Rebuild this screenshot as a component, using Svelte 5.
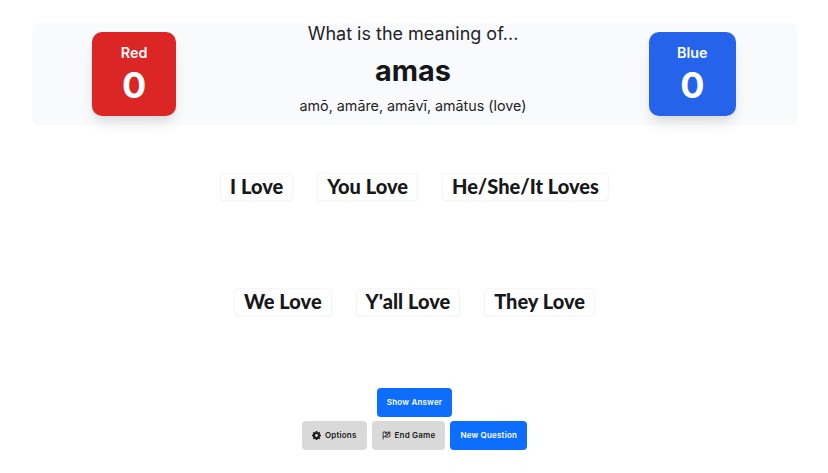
<script lang="ts">
  const rows = [
    ["I Love", "You Love", "He/She/It Loves"],
    ["We Love", "Y'all Love", "They Love"],
  ];
</script>

<div class="page">
  <header class="panel">
    <div class="team red">
      <div class="team-name">Red</div>
      <div class="team-score">0</div>
    </div>
    <div class="prompt">
      <div class="prompt-lead">What is the meaning of...</div>
      <div class="prompt-word">amas</div>
      <div class="prompt-hint">amō, amāre, amāvī, amātus (love)</div>
    </div>
    <div class="team blue">
      <div class="team-name">Blue</div>
      <div class="team-score">0</div>
    </div>
  </header>

  <div class="answers">
    {#each rows as row, i (i)}
      <div class="answer-row">
        {#each row as label (label)}
          <button type="button" class="answer">{label}</button>
        {/each}
      </div>
    {/each}
  </div>

  <div class="controls">
    <div class="control-row">
      <button type="button" class="ctl primary">Show Answer</button>
    </div>
    <div class="control-row">
      <button type="button" class="ctl muted">
        <svg viewBox="0 0 16 16" width="9" height="9" aria-hidden="true">
          <path
            fill="currentColor"
            fill-rule="evenodd"
            d="M6.6 0h2.8l.4 2.1 1.1.5 1.8-1.2 2 2-1.2 1.8.5 1.1 2 .4v2.8l-2 .4-.5 1.1 1.2 1.8-2 2-1.8-1.2-1.1.5-.4 2.1H6.6l-.4-2.1-1.1-.5-1.8 1.2-2-2 1.2-1.8-.5-1.1-2-.4V6.700l2-.4.5-1.100L1.300 3.400l2-2 1.800 1.200 1.100-.5zM8 5.400a2.600 2.600 0 1 0 0 5.200 2.600 2.600 0 0 0 0-5.200z"
          />
        </svg>
        Options
      </button>
      <button type="button" class="ctl muted">
        <svg viewBox="0 0 16 16" width="9" height="9" aria-hidden="true">
          <path
            fill="none"
            stroke="currentColor"
            stroke-width="1.400"
            d="M2 15V2c3-1.500 5 .5 7 .5 2 0 3-.5 5-1v8.500c-2 .5-3 1-5 1s-4-2-7-.5"
          />
          <path fill="currentColor" d="M5 2h3v3H5zM8 5h3v3H8zM11 2h2.500v3H11zM5 8h3v2H5z" />
        </svg>
        End Game
      </button>
      <button type="button" class="ctl primary">New Question</button>
    </div>
  </div>
</div>

<style>
  :global(body) {
    background: #fff;
    font-family: Inter, "Liberation Sans", sans-serif;
  }

  .page {
    height: 473px;
    padding: 23px 31px 0 32px;
    box-sizing: border-box;
    overflow: hidden;
  }

  .panel {
    display: flex;
    justify-content: space-around;
    align-items: flex-start;
    height: 102px;
    background: #f9fafb;
    border-radius: 6px;
  }

  .team {
    margin-top: 9px;
    height: 84px;
    border-radius: 10px;
    color: #fff;
    text-align: center;
    box-shadow:
      0 10px 15px -3px rgba(0, 0, 0, 0.1),
      0 4px 6px -2px rgba(0, 0, 0, 0.05);
    box-sizing: border-box;
    padding-top: 12px;
  }

  .red {
    width: 84px;
    margin-left: -1px;
    margin-right: 1px;
    background: #dc2626;
  }

  .blue {
    width: 87px;
    background: #2563eb;
  }

  .team-name {
    font-size: 14.4px;
    font-weight: 600;
    line-height: 18px;
  }

  .team-score {
    margin-top: 1px;
    font-size: 36px;
    font-weight: 700;
    line-height: 44px;
  }

  .prompt {
    text-align: center;
    color: #1f2328;
  }

  .prompt-lead {
    font-size: 18px;
    line-height: 20px;
    padding-top: 1px;
  }

  .prompt-word {
    margin-top: 9px;
    font-size: 28.8px;
    font-weight: 700;
    line-height: 36px;
    color: #14171a;
  }

  .prompt-hint {
    margin-top: 6px;
    font-size: 14.3px;
    line-height: 22px;
  }

  .answers {
    display: flex;
    flex-direction: column;
    gap: 87px;
    padding-top: 48px;
  }

  .answer-row {
    display: flex;
    justify-content: center;
    gap: 24px;
  }

  .answer {
    height: 28px;
    padding: 0 9px 2px;
    background: #fff;
    border: 1px solid #f6f6f8;
    border-radius: 4px;
    box-shadow: 0 1px 2px rgba(0, 0, 0, 0.03);
    font-family: Lato, "Open Sans", sans-serif;
    font-size: 20px;
    font-weight: 900;
    color: #17181a;
    line-height: 1;
  }

  .controls {
    display: flex;
    flex-direction: column;
    gap: 4.5px;
    margin-top: 72px;
  }

  .control-row {
    display: flex;
    justify-content: center;
    gap: 5px;
  }

  .ctl {
    display: flex;
    align-items: center;
    justify-content: center;
    gap: 4px;
    height: 28.5px;
    padding: 0 10px;
    border: none;
    border-radius: 4px;
    font-family: Inter, "Liberation Sans", sans-serif;
    font-size: 8px;
    font-weight: 600;
    letter-spacing: 0.2px;
  }

  .primary {
    background: #0d6efd;
    color: #fff;
  }

  .muted {
    background: #d9d9d9;
    color: #1a1a1a;
  }
</style>
